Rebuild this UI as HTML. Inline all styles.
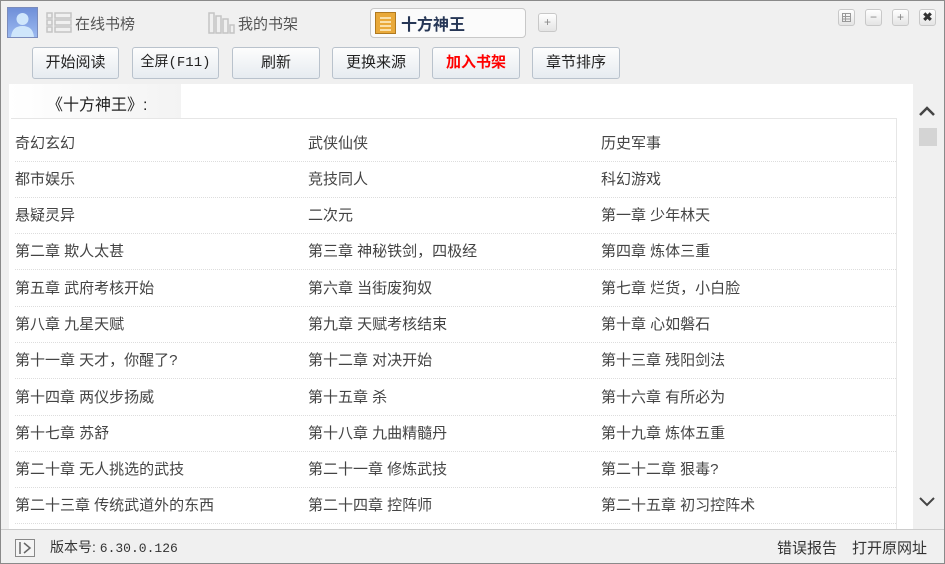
<!DOCTYPE html>
<html><head><meta charset="utf-8"><style>
*{margin:0;padding:0;box-sizing:border-box}
body{width:945px;height:564px;overflow:hidden;background:#f1f1f1;font-family:"Liberation Sans","Noto Sans CJK SC","WenQuanYi Zen Hei",sans-serif;position:relative}
.win{position:absolute;left:0;top:0;width:945px;height:564px;border:1px solid #8a8a8a;background:#f0f0f0}
.abs{position:absolute}
.tab{font-size:15px;color:#555;top:12px}
.btn{position:absolute;top:46px;height:32px;border:1px solid #b9c2cc;border-radius:3px;background:linear-gradient(#fdfdfd,#e6ebf0);font-size:15px;color:#222;text-align:center;line-height:30px}
.content{position:absolute;left:8px;top:83px;width:904px;height:445px;background:#fff}
.list{position:absolute;left:10px;top:117px;width:886px;height:411px;border-top:1px solid #e6e6e6;border-right:1px solid #e6e6e6}
.row{position:absolute;left:4px;width:881px;border-bottom:1px dotted #ddd;height:36px}
.row span{position:absolute;top:6px;font-size:15px;color:#444;white-space:nowrap}
.c1{left:0}.c2{left:293px}.c3{left:586px}
.wc{position:absolute;top:8px;width:17px;height:17px;border:1px solid #c8c8c8;border-radius:3px;background:linear-gradient(#fff,#e4e4e4);font-size:12px;color:#888;text-align:center;line-height:15px}
</style></head><body><div class="win">
<div class="abs" style="left:6px;top:6px;width:31px;height:31px;background:linear-gradient(#6f8fd8,#9bb9f0);border:1px solid #7a8bbb">
<svg width="29" height="29"><circle cx="14.5" cy="11" r="6" fill="#cfe6fb"/><path d="M3 29 Q4 18 14.5 18 Q25 18 26 29Z" fill="#cfe6fb"/></svg></div>
<svg class="abs" style="left:45px;top:11px" width="27" height="22"><g fill="none" stroke="#c4c4c4" stroke-width="1.5"><rect x="1" y="1" width="5" height="5"/><rect x="1" y="8" width="5" height="5"/><rect x="1" y="15" width="5" height="5"/><rect x="9" y="1" width="16" height="5"/><rect x="9" y="8" width="16" height="5"/><rect x="9" y="15" width="16" height="5"/></g></svg>
<div class="abs tab" style="left:74px">在线书榜</div>
<svg class="abs" style="left:207px;top:11px" width="28" height="22"><g fill="none" stroke="#c4c4c4" stroke-width="1.5"><rect x="1" y="1" width="5" height="20"/><rect x="8" y="4" width="5" height="17"/><rect x="15" y="7" width="5" height="14"/><rect x="22" y="13" width="4" height="8"/></g></svg>
<div class="abs tab" style="left:237px">我的书架</div>
<div class="abs" style="left:369px;top:7px;width:156px;height:30px;border:1px solid #c8c8c8;border-radius:4px;background:#fbfbfb"></div>
<svg class="abs" style="left:374px;top:11px" width="21" height="22"><rect x="0.5" y="0.5" width="20" height="21" fill="#e9a93a" stroke="#b07a20"/><g stroke="#fff3d0" stroke-width="1.5"><line x1="5" y1="6" x2="16" y2="6"/><line x1="5" y1="10" x2="16" y2="10"/><line x1="5" y1="14" x2="16" y2="14"/><line x1="5" y1="18" x2="16" y2="18"/></g></svg>
<div class="abs" style="left:400px;top:10px;font-size:16px;font-weight:bold;color:#263655">十方神王</div>
<div class="wc" style="left:537px;top:12px;width:19px;height:19px;line-height:17px">+</div>
<div class="wc" style="left:837px"><svg width="15" height="15"><rect x="3.5" y="3.5" width="8" height="8" fill="none" stroke="#999"/><line x1="3" y1="6.5" x2="12" y2="6.5" stroke="#999"/><line x1="3" y1="9" x2="12" y2="9" stroke="#999"/><line x1="6.5" y1="4" x2="6.5" y2="11" stroke="#999"/></svg></div>
<div class="wc" style="left:864px">−</div>
<div class="wc" style="left:891px">+</div>
<div class="wc" style="left:918px;color:#333;font-weight:bold">✖</div>
<div class="btn" style="left:31px;width:87px">开始阅读</div>
<div class="btn" style="left:131px;width:87px;font-family:'Liberation Mono','Noto Sans CJK SC',monospace;font-size:14px">全屏(F11)</div>
<div class="btn" style="left:231px;width:88px">刷新</div>
<div class="btn" style="left:331px;width:88px">更换来源</div>
<div class="btn" style="left:431px;width:88px;color:#f00;font-weight:bold">加入书架</div>
<div class="btn" style="left:531px;width:88px">章节排序</div>
<div class="content"></div>
<div class="abs" style="left:8px;top:83px;width:172px;height:34px;background:linear-gradient(90deg,#fff,#f3f3f3)"></div>
<div class="abs" style="left:46px;top:90px;font-size:16px;color:#222">《十方神王》:</div>
<div class="list">
<div class="row" style="top:7px"><span class="c1">奇幻玄幻</span><span class="c2">武侠仙侠</span><span class="c3">历史军事</span></div>
<div class="row" style="top:43px"><span class="c1">都市娱乐</span><span class="c2">竞技同人</span><span class="c3">科幻游戏</span></div>
<div class="row" style="top:79px"><span class="c1">悬疑灵异</span><span class="c2">二次元</span><span class="c3">第一章 少年林天</span></div>
<div class="row" style="top:115px"><span class="c1">第二章 欺人太甚</span><span class="c2">第三章 神秘铁剑，四极经</span><span class="c3">第四章 炼体三重</span></div>
<div class="row" style="top:152px"><span class="c1">第五章 武府考核开始</span><span class="c2">第六章 当街废狗奴</span><span class="c3">第七章 烂货，小白脸</span></div>
<div class="row" style="top:188px"><span class="c1">第八章 九星天赋</span><span class="c2">第九章 天赋考核结束</span><span class="c3">第十章 心如磐石</span></div>
<div class="row" style="top:224px"><span class="c1">第十一章 天才，你醒了?</span><span class="c2">第十二章 对决开始</span><span class="c3">第十三章 残阳剑法</span></div>
<div class="row" style="top:261px"><span class="c1">第十四章 两仪步扬威</span><span class="c2">第十五章 杀</span><span class="c3">第十六章 有所必为</span></div>
<div class="row" style="top:297px"><span class="c1">第十七章 苏舒</span><span class="c2">第十八章 九曲精髓丹</span><span class="c3">第十九章 炼体五重</span></div>
<div class="row" style="top:333px"><span class="c1">第二十章 无人挑选的武技</span><span class="c2">第二十一章 修炼武技</span><span class="c3">第二十二章 狠毒?</span></div>
<div class="row" style="top:369px"><span class="c1">第二十三章 传统武道外的东西</span><span class="c2">第二十四章 控阵师</span><span class="c3">第二十五章 初习控阵术</span></div>
</div>
<svg class="abs" style="left:917px;top:103px" width="18" height="14"><path d="M2 11 L9 4 L16 11" fill="none" stroke="#444" stroke-width="2.5"/></svg>
<div class="abs" style="left:918px;top:127px;width:18px;height:18px;background:#d4d4d4"></div>
<svg class="abs" style="left:917px;top:494px" width="18" height="14"><path d="M2 3 L9 10 L16 3" fill="none" stroke="#444" stroke-width="2"/></svg>
<div class="abs" style="left:0;top:528px;width:943px;height:1px;background:#ccc"></div>
<svg class="abs" style="left:14px;top:538px" width="20" height="18"><rect x="0.5" y="0.5" width="19" height="17" fill="#f4f4f4" stroke="#888"/><line x1="5" y1="3" x2="5" y2="15" stroke="#666" stroke-width="1.5"/><path d="M9 4 L15 9 L9 14" fill="none" stroke="#666" stroke-width="1.5"/></svg>
<div class="abs" style="left:49px;top:536px;font-size:14px;color:#333">版本号: <span style="font-family:'Liberation Mono',monospace;font-size:13px">6.30.0.126</span></div>
<div class="abs" style="left:776px;top:536px;font-size:15px;color:#333">错误报告</div>
<div class="abs" style="left:851px;top:536px;font-size:15px;color:#333">打开原网址</div>
</div></body></html>
